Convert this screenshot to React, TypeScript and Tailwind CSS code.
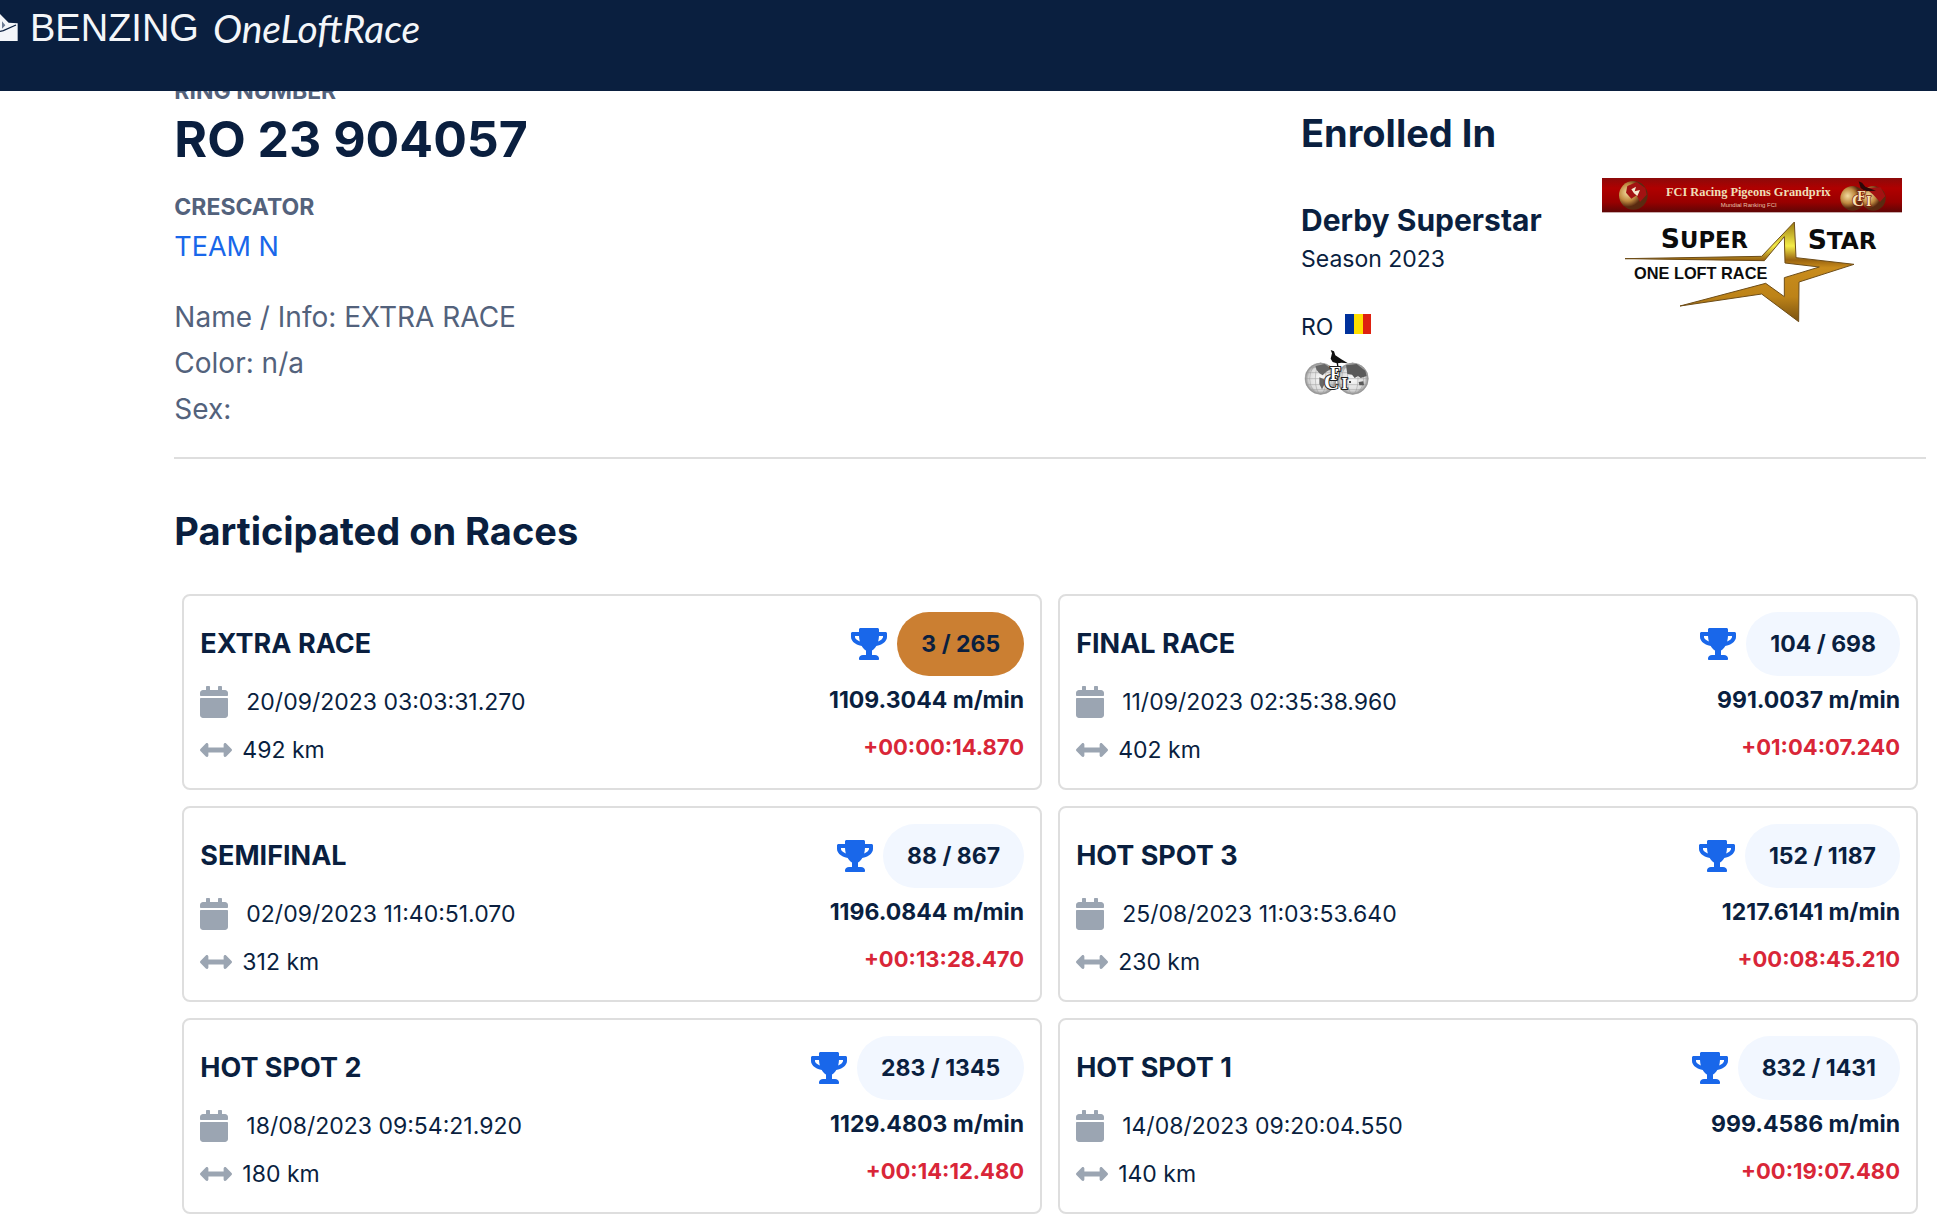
import React from "react";
import { FaArrowsAltH, FaCalendar, FaTrophy } from "react-icons/fa";

type Race = {
  name: string;
  date: string;
  distance: string;
  rank: string;
  speed: string;
  gap: string;
  podium?: boolean;
};

const races: Race[] = [
  { name: "EXTRA RACE", date: "20/09/2023 03:03:31.270", distance: "492 km", rank: "3 / 265", speed: "1109.3044 m/min", gap: "+00:00:14.870", podium: true },
  { name: "FINAL RACE", date: "11/09/2023 02:35:38.960", distance: "402 km", rank: "104 / 698", speed: "991.0037 m/min", gap: "+01:04:07.240" },
  { name: "SEMIFINAL", date: "02/09/2023 11:40:51.070", distance: "312 km", rank: "88 / 867", speed: "1196.0844 m/min", gap: "+00:13:28.470" },
  { name: "HOT SPOT 3", date: "25/08/2023 11:03:53.640", distance: "230 km", rank: "152 / 1187", speed: "1217.6141 m/min", gap: "+00:08:45.210" },
  { name: "HOT SPOT 2", date: "18/08/2023 09:54:21.920", distance: "180 km", rank: "283 / 1345", speed: "1129.4803 m/min", gap: "+00:14:12.480" },
  { name: "HOT SPOT 1", date: "14/08/2023 09:20:04.550", distance: "140 km", rank: "832 / 1431", speed: "999.4586 m/min", gap: "+00:19:07.480" },
];

function BrandMark() {
  return (
    <svg width="18" height="27" viewBox="0 0 54 81" aria-hidden="true">
      <path d="M0 0 L26 26 L53 28 L53 81 L0 81 Z" fill="#f4f6f9" />
      <path d="M0 52 L10 50 L48 33" fill="none" stroke="#0a1f3f" strokeWidth="4" />
      <path d="M6 22 L16 34 L6 44Z" fill="#6b7a92" />
    </svg>
  );
}

function Header() {
  return (
    <header className="relative z-10 h-[91px] bg-[#0a1f3f]">
      <a href="#" className="flex items-start pt-[14px] text-[#f4f6f9]">
        <BrandMark />
        <span className="-mt-1 ml-3 font-['Liberation_Sans'] text-[38px] leading-[36px]">BENZING</span>
        <span className="-mt-1 ml-[14px] font-['Lato'] text-[39px] leading-[36px] italic">OneLoftRace</span>
      </a>
    </header>
  );
}

function Flag() {
  return (
    <span className="mb-1.5 flex h-5 w-[26px]" role="img" aria-label="Romania">
      <span className="flex-1 bg-[#00319c]" />
      <span className="flex-1 bg-[#ffde00]" />
      <span className="flex-1 bg-[#de2110]" />
    </span>
  );
}

function FciBadge() {
  return (
    <svg className="ml-[3px] mt-1" width="66" height="46" viewBox="0 0 198 138" role="img" aria-label="FCI">
      <defs>
        <radialGradient id="globe">
          <stop offset="0" stopColor="#fafafa" />
          <stop offset="0.75" stopColor="#dcdcdc" />
          <stop offset="1" stopColor="#8a8a8a" />
        </radialGradient>
      </defs>
      {[50, 146].map((cx) => (
        <g key={cx} fill="none" stroke="#9b9b9b" strokeWidth="1.5">
          <circle cx={cx} cy="86" r="47" fill="url(#globe)" />
          <ellipse cx={cx} cy="86" rx="16" ry="47" />
          <ellipse cx={cx} cy="86" rx="33" ry="47" />
          <path d={`M${cx - 47} 86 h94 M${cx - 43} 68 h86 M${cx - 43} 104 h86 M${cx - 33} 53 h66 M${cx - 33} 119 h66`} />
        </g>
      ))}
      <path d="M34 48 L62 42 L82 56 L66 66 L56 76 L46 70 L38 60Z M46 82 L60 88 L60 106 L54 118 L46 102Z" fill="#666" />
      <path d="M126 46 L158 42 L184 62 L188 78 L170 84 L162 78 L152 84 L144 74 L130 72Z M164 96 L178 94 L180 106 L166 106Z" fill="#5a5a5a" />
      <path d="M80 0 L90 4 L94 16 L112 28 L132 40 L112 38 L102 40 L104 52 L100 52 L98 40 L86 36 L80 26 L84 10Z" fill="#111" />
      <g fill="#fff" stroke="#222" strokeWidth="6" paintOrder="stroke" fontFamily="Liberation Serif" fontWeight="700">
        <text x="60" y="117" fontSize="62">C</text>
        <text x="78" y="90" fontSize="54">F</text>
        <text x="112" y="117" fontSize="50">I</text>
      </g>
      <circle cx="138" cy="96" r="3" fill="#111" />
    </svg>
  );
}

function SuperStarLogo() {
  return (
    <svg className="mt-[101px] shrink-0" width="300" height="150" viewBox="36 54 900 450" role="img" aria-label="Super Star One Loft Race">
      <defs>
        <linearGradient id="banner" x1="0" y1="0" x2="0" y2="1">
          <stop offset="0" stopColor="#8c0a0a" />
          <stop offset="0.3" stopColor="#b00000" />
          <stop offset="0.7" stopColor="#980000" />
          <stop offset="1" stopColor="#5e0606" />
        </linearGradient>
        <linearGradient id="gold" x1="0" y1="0" x2="0" y2="1">
          <stop offset="0" stopColor="#9a7a10" />
          <stop offset="0.24" stopColor="#f4ec48" />
          <stop offset="0.38" stopColor="#9a6410" />
          <stop offset="0.46" stopColor="#c98c1c" />
          <stop offset="0.75" stopColor="#bd8318" />
          <stop offset="1" stopColor="#7a5210" />
        </linearGradient>
        <radialGradient id="orb" cx="0.3" cy="0.4">
          <stop offset="0" stopColor="#f3dca0" />
          <stop offset="0.6" stopColor="#c08a40" />
          <stop offset="1" stopColor="#5a2a10" />
        </radialGradient>
      </defs>
      <rect x="36" y="54" width="900" height="103" fill="url(#banner)" />
      <circle cx="130" cy="106" r="43" fill="url(#orb)" />
      <path d="M112 78 L140 66 L166 84 L170 104 L150 126 L140 106 L124 116 L108 98Z" fill="#a31212" />
      <path d="M124 88 L138 80 L134 94 L150 90 L142 108 L132 100Z" fill="#f6ead0" />
      <text x="228" y="108" fontSize="37" fontWeight="700" fontFamily="Liberation Serif" fill="#eedfb8">FCI Racing Pigeons Grandprix</text>
      <text x="392" y="140" fontSize="18" fontFamily="Liberation Sans" fill="#e8c0a8">Mundial Ranking FCI</text>
      <circle cx="788" cy="115" r="37" fill="url(#orb)" />
      <circle cx="850" cy="115" r="37" fill="url(#orb)" />
      <path d="M826 84 L872 82 L886 108 L870 126 L850 104Z" fill="#a31212" />
      <path d="M806 64 L816 68 L826 80 L858 92 L826 94 L812 84Z" fill="#2b0808" />
      <g fill="#f6e3b4" stroke="#7a1608" strokeWidth="4" paintOrder="stroke" fontFamily="Liberation Serif" fontWeight="700">
        <text x="786" y="139" fontSize="50">C</text>
        <text x="802" y="124" fontSize="42">F</text>
        <text x="828" y="139" fontSize="42">I</text>
      </g>
      <path
        d="M105 296 L515 289 L613 186 L618 293 L792 313 L627 366 L626 485 L515 402 L270 438 L527 370 L583 410 L583 353 L688 321 L585 309 L583 230 L523 302Z"
        fill="url(#gold)"
        stroke="#6e4d18"
        strokeWidth="3"
      />
      <g fill="#0c0c0c" fontFamily="DejaVu Sans" fontWeight="700">
        <text x="212" y="264" fontSize="80">S</text>
        <text x="270" y="264" fontSize="68">UPER</text>
        <text x="653" y="267" fontSize="80">S</text>
        <text x="710" y="267" fontSize="70">TAR</text>
      </g>
      <text x="132" y="356" fontSize="49" fontWeight="700" fontFamily="Liberation Sans" fill="#0c0c0c">ONE LOFT RACE</text>
    </svg>
  );
}

function RaceCard({ race }: { race: Race }) {
  return (
    <article className="flex justify-between rounded-lg border-2 border-[#dedede] p-4">
      <div>
        <h3 className="text-[27px] leading-[64px] font-bold">{race.name}</h3>
        <p className="flex h-[52px] items-center gap-[18px] text-[23px]">
          <FaCalendar className="h-8 w-7 text-[#9ba5b2]" />
          {race.date}
        </p>
        <p className="flex h-[44px] items-center gap-[10px] text-[23px]">
          <FaArrowsAltH className="size-8 text-[#9ba5b2]" />
          {race.distance}
        </p>
      </div>
      <div className="text-right text-[23px] font-bold">
        <div className="flex items-center justify-end gap-[10px]">
          <FaTrophy className="h-8 w-9 text-[#1967ea]" />
          <span className={`rounded-full px-6 leading-[64px] ${race.podium ? "bg-[#cb7f32]" : "bg-[#f2f7ff]"}`}>{race.rank}</span>
        </div>
        <p className="leading-[48px]">{race.speed}</p>
        <p className="text-[22px] leading-[46px] text-[#d92638]">{race.gap}</p>
      </div>
    </article>
  );
}

export default function App() {
  return (
    <div className="min-h-screen bg-white font-['Inter',sans-serif] text-[#0a1f3f]">
      <Header />
      <main className="-mt-[14px] pr-[11px] pb-3 pl-[9%]">
        <div className="flex">
          <section className="flex-1 text-[#53627c]">
            <p className="text-[23px] leading-[28px] font-bold">RING NUMBER</p>
            <h1 className="text-[50px] leading-[68px] font-bold text-[#0a1f3f]">RO 23 904057</h1>
            <p className="mt-[14px] text-[23px] leading-[40px] font-bold">CRESCATOR</p>
            <a href="#" className="block text-[27px] leading-[40px] text-[#1967ea]">TEAM N</a>
            <div className="mt-[27px] text-[28px] leading-[46px]">
              <p>Name / Info: EXTRA RACE</p>
              <p>Color: n/a</p>
              <p>Sex:</p>
            </div>
          </section>
          <section className="flex w-[625px] shrink-0 justify-between pr-6">
            <div className="pt-8">
              <h2 className="text-[38px] leading-[48px] font-bold">Enrolled In</h2>
              <h3 className="mt-[43px] text-[30px] leading-[40px] font-bold">Derby Superstar</h3>
              <p className="text-[23px] leading-[38px]">Season 2023</p>
              <p className="mt-[30px] flex items-center gap-3 text-[23px] leading-[38px]">
                RO <Flag />
              </p>
              <FciBadge />
            </div>
            <SuperStarLogo />
          </section>
        </div>
        <hr className="mt-[25px] border-t-2 border-[#dedede]" />
        <h2 className="mt-12 text-[38px] leading-[48px] font-bold">Participated on Races</h2>
        <div className="mx-2 mt-[39px] grid grid-cols-2 gap-4">
          {races.map((race) => (
            <RaceCard key={race.name} race={race} />
          ))}
        </div>
      </main>
    </div>
  );
}
